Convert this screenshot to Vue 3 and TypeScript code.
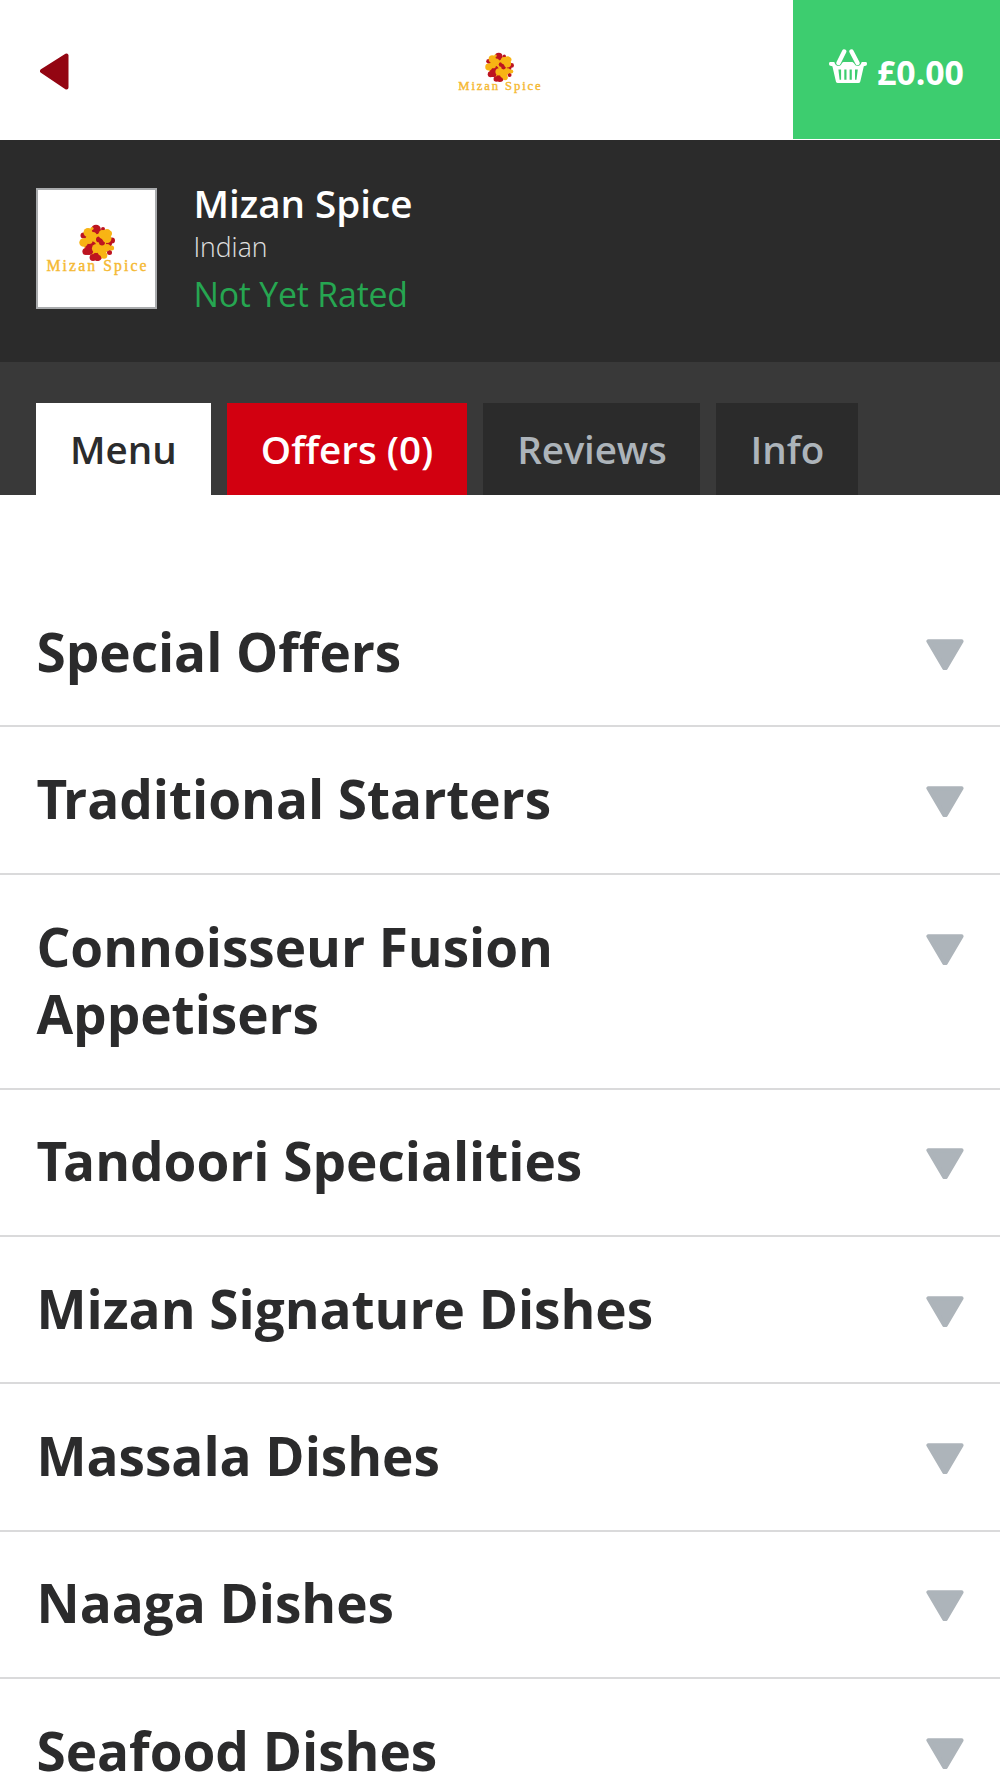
<script setup lang="ts">
interface Tab {
  label: string
  kind: 'active' | 'offers' | 'reviews' | 'info'
}

const tabs: Tab[] = [
  { label: 'Menu', kind: 'active' },
  { label: 'Offers (0)', kind: 'offers' },
  { label: 'Reviews', kind: 'reviews' },
  { label: 'Info', kind: 'info' },
]

const categories: string[] = [
  'Special Offers',
  'Traditional Starters',
  'Connoisseur Fusion Appetisers',
  'Tandoori Specialities',
  'Mizan Signature Dishes',
  'Massala Dishes',
  'Naaga Dishes',
  'Seafood Dishes',
]

// Spice-ball blobs: x, y, radius, colour
type Blob = [number, number, number, string]
const gold = '#f8b414'
const red = '#bd1420'
const blobs: Blob[] = [
  [18, 18, 13.5, gold],
  [17, 5, 4.8, red], [24, 4.6, 2, red], [4.5, 11, 3, red], [33, 16, 3, red],
  [12, 22, 5.5, red], [7, 27, 3.6, red], [14, 33, 3.4, red], [18.5, 32, 4.6, red],
  [30.5, 28, 2.5, red], [20, 15, 3, red], [23, 18, 3, red], [30, 19, 3, red], [10, 26, 4.5, red],
  [9, 8, 4.5, gold], [14, 11, 3.6, gold], [4.6, 18, 4.3, gold], [10, 16, 3.6, gold],
  [24, 10, 4.5, gold], [28, 8, 3.5, gold], [28, 14, 4.5, gold],
  [17.5, 24, 4.6, gold], [23, 27, 4.5, gold], [25, 31, 3.3, gold], [28, 23, 3.5, gold],
  [32.6, 23.5, 2.5, gold], [30, 9, 3, gold], [13, 4, 1.6, gold],
]
</script>

<template>
  <div class="page">
    <header class="topbar">
      <button class="back" aria-label="Back">
        <svg width="29" height="37" viewBox="0 0 29 37">
          <path d="M2 18 L26.5 2.5 V34.5 Z" fill="#930512" stroke="#930512" stroke-width="4" stroke-linejoin="round" />
        </svg>
      </button>
      <div class="brand small">
        <svg class="ball" viewBox="0 0 36 36">
          <circle v-for="(b, i) in blobs" :key="i" :cx="b[0]" :cy="b[1]" :r="b[2]" :fill="b[3]" />
        </svg>
        <span class="wordmark">Mizan Spice</span>
      </div>
      <div class="basket">
        <svg width="38" height="35" viewBox="0 0 38 35">
          <path d="M15.2 2.5 L9.5 14 M22.5 2.5 L28.5 14" stroke="#fff" stroke-width="4.4" stroke-linecap="round" fill="none" />
          <path fill="#fff" fill-rule="evenodd" d="M1 13 H5.3 Q6.5 17.2 10 17 Q12.3 16.6 13.2 13.8 L14.5 13 H23.5 L25 14.2 Q26 16.8 28.5 17 Q31.5 17 32.7 13 H37 Q38 13 38 14.7 Q38 16.5 36.7 16.7 L34.8 17.2 L31.3 32.5 Q30.9 34 29.3 34 H9 Q7.3 34 6.9 32.5 L3.4 17.2 L1.3 16.7 Q0 16.5 0 14.7 Q0 13 1 13 Z M9.4 20.5 L10.6 30.8 H12.1 V20.5 Z M15.3 20.5 V30.8 H17.5 V20.5 Z M20.6 20.5 V30.8 H22.8 V20.5 Z M26 20.5 V30.8 H27.5 L28.8 20.5 Z" />
        </svg>
        <span class="total">£0.00</span>
      </div>
    </header>

    <section class="restaurant">
      <div class="thumb">
        <div class="brand large">
          <svg class="ball" viewBox="0 0 36 36">
            <circle v-for="(b, i) in blobs" :key="i" :cx="b[0]" :cy="b[1]" :r="b[2]" :fill="b[3]" />
          </svg>
          <span class="wordmark">Mizan Spice</span>
        </div>
      </div>
      <div class="details">
        <h1>Mizan Spice</h1>
        <p class="cuisine">Indian</p>
        <p class="rating">Not Yet Rated</p>
      </div>
    </section>

    <nav class="tabs">
      <a v-for="t in tabs" :key="t.label" class="tab" :class="t.kind">{{ t.label }}</a>
    </nav>

    <main class="menu">
      <div v-for="c in categories" :key="c" class="row">
        <h2 :class="{ kerned: c.startsWith('T') }">{{ c }}</h2>
        <svg class="chevron" width="38" height="31" viewBox="0 0 38 31">
          <path d="M2.4 2.3 H35.6 L20 28.7 Q19 30 18 28.7 Z" fill="#adb4ba" stroke="#adb4ba" stroke-width="4" stroke-linejoin="round" />
        </svg>
      </div>
    </main>
  </div>
</template>

<style>
body {
  background: #fff;
}
</style>

<style scoped>
.page {
  width: 1000px;
  height: 1778px;
  overflow: hidden;
  background: #fff;
  color: #2b2b2c;
  font-family: "Open Sans", "Noto Sans", sans-serif;
}
h1, h2, p {
  margin: 0;
}
.topbar {
  height: 140px;
  display: grid;
  grid-template-columns: 207px 1fr 207px;
  align-items: start;
  background: #fff;
}
.back {
  margin: 52.5px 0 0 39.5px;
  padding: 0;
  width: 29px;
  height: 37px;
  border: 0;
  background: none;
}
.back svg,
.ball {
  display: block;
}
.brand {
  display: flex;
  flex-direction: column;
  align-items: center;
}
.wordmark {
  color: #f5b933;
  font-family: "Liberation Serif", serif;
  white-space: nowrap;
  -webkit-text-stroke: 0.4px #f5b933;
}
.small {
  margin-top: 52px;
  margin-right: 1px;
}
.small .ball {
  width: 29px;
  height: 30px;
}
.small .wordmark {
  margin-top: -3px;
  font-size: 12.6px;
  line-height: 15px;
  letter-spacing: 1.9px;
  margin-right: -1.9px;
}
.basket {
  height: 139px;
  display: flex;
  background: #3dcd6f;
  color: #fff;
}
.basket svg {
  flex: none;
  margin: 49px 0 0 36px;
}
.total {
  margin: 48px 0 0 10px;
  font-size: 33.8px;
  line-height: 48px;
  font-weight: 700;
}
.restaurant {
  height: 222px;
  display: flex;
  background: #2b2b2b;
}
.thumb {
  box-sizing: border-box;
  width: 121px;
  height: 121px;
  margin: 48px 0 0 36px;
  border: 2.4px solid #a9abad;
  background: #fff;
}
.large {
  margin-top: 33.5px;
}
.large .ball {
  width: 36px;
  height: 37px;
}
.large .wordmark {
  margin-top: -3.5px;
  font-size: 15.7px;
  line-height: 18px;
  letter-spacing: 2.1px;
  margin-right: -2.1px;
}
.details {
  margin: 35px 0 0 36.4px;
}
.details h1 {
  color: #fff;
  font-size: 38.6px;
  line-height: 56px;
  font-weight: 600;
}
.cuisine {
  margin-top: 0.5px;
  color: #e0e0e0;
  font-size: 26.6px;
  line-height: 30px;
  font-weight: 300;
}
.rating {
  margin-top: 9.5px;
  color: #26a651;
  font-size: 33.8px;
  line-height: 46px;
  letter-spacing: -0.17px;
}
.tabs {
  height: 133px;
  display: flex;
  align-items: flex-end;
  gap: 16px;
  padding-left: 36px;
  background: #393939;
}
.tab {
  height: 92px;
  padding: 0 34px;
  font-size: 38.6px;
  line-height: 92px;
  font-weight: 600;
  background: #2b2b2b;
  color: #adb4ba;
}
.tab.active {
  background: #fff;
  color: #2b2b2c;
}
.tab.offers {
  background: #d20010;
  color: #fff;
}
.tab.reviews {
  letter-spacing: -0.22px;
}
.menu {
  padding-top: 85px;
}
.row {
  display: flex;
  justify-content: space-between;
  align-items: flex-start;
  padding: 37.9px 36.5px 39.9px;
  border-bottom: 2px solid #dadadb;
}
.row h2 {
  max-width: 700px;
  font-size: 53.14px;
  line-height: 67.55px;
  font-weight: 700;
  letter-spacing: -0.04px;
}
/* Tighten the gap between a leading T and the lowercase letter after it */
.row h2.kerned::first-letter {
  letter-spacing: -4.2px;
}
.chevron {
  flex: none;
  margin-top: 21px;
}
</style>
